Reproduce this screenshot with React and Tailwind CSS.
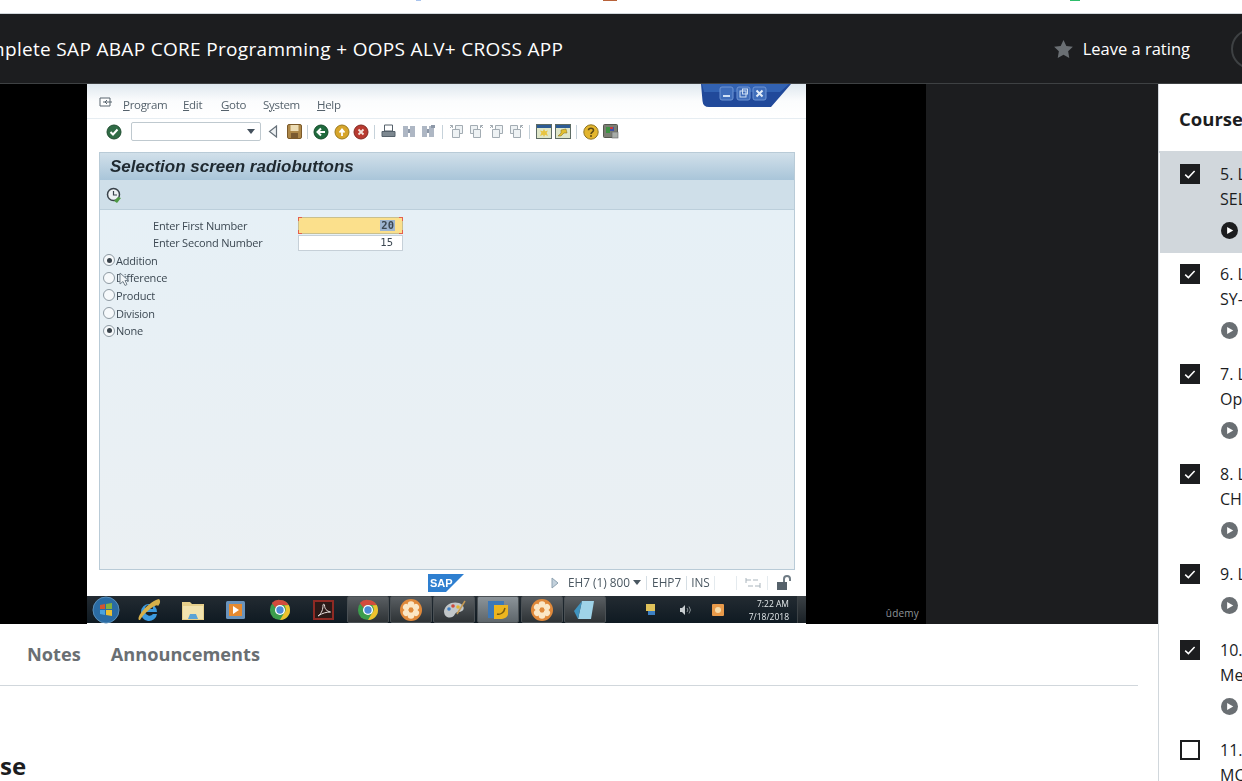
import React from "react";

const UI = { fontFamily: '"Open Sans", "Noto Sans", sans-serif' };
const SAPF = { fontFamily: '"Open Sans", "Liberation Sans", sans-serif' };

function Check() {
  return (
    <svg width="20" height="20" viewBox="0 0 20 20" className="shrink-0 block">
      <rect width="20" height="20" fill="#1c1d1f" />
      <path d="M5.2 10.6l3.2 3 6.2-6.6" fill="none" stroke="#fff" strokeWidth="1.5" />
    </svg>
  );
}
function Empty() {
  return <div className="w-5 h-5 shrink-0 border-2 border-[#1c1d1f] bg-white" />;
}
function Play({ dark }) {
  return (
    <svg width="17" height="17" viewBox="0 0 18 18" className="block">
      <circle cx="9" cy="9" r="9" fill={dark ? "#1c1d1f" : "#6a6f73"} />
      <path d="M6.5 5.2v7.6L13 9z" fill="#fff" />
    </svg>
  );
}

const items = [
  { n: "5. L", t: "SEL", active: true, h: "h-[100px]", done: true },
  { n: "6. L", t: "SY-", h: "h-[100px]", done: true },
  { n: "7. L", t: "Op", h: "h-[100px]", done: true },
  { n: "8. L", t: "CH", h: "h-[100px]", done: true },
  { n: "9. L", h: "h-[76px]", done: true },
  { n: "10.", t: "Me", h: "h-[100px]", done: true },
  { n: "11.", t: "MC", h: "h-[100px]", done: false },
];

function Ball({ c1, c2, children }) {
  return (
    <svg width="16" height="16" viewBox="0 0 16 16" className="block shrink-0">
      <circle cx="8" cy="8" r="7" fill={c1} stroke={c2} strokeWidth="1" />
      {children}
    </svg>
  );
}
function GrayPage({ flip }) {
  return (
    <svg width="15" height="15" viewBox="0 0 15 15" className="block shrink-0">
      <g transform={flip ? "matrix(-1 0 0 1 15 0)" : undefined} fill="#eef2f4" stroke="#a3acb3" strokeWidth="1">
        <path d="M6.500 1.500h7v8h-7z" />
        <path d="M3.500 5.500h7v8h-7z" />
        <path d="M1 4l2.500-2.500M1 1.500h2.500V4" fill="none" />
      </g>
    </svg>
  );
}
function Binoc({ plus }) {
  return (
    <svg width="16" height="15" viewBox="0 0 16 15" className="block shrink-0">
      <rect x="2" y="2" width="5" height="11" fill="#aeb7c4" />
      <rect x="9" y="2" width="5" height="11" fill="#aeb7c4" />
      <rect x="7" y="5" width="2" height="4" fill="#8d98a8" />
      {plus && <path d="M11 1h4v3h-4z" fill="#8d98a8" />}
    </svg>
  );
}
function Sep() {
  return <div className="w-px h-3.5 bg-[#c6d2da] shrink-0" />;
}
function WinIcon({ variant }) {
  return (
    <svg width="16" height="15" viewBox="0 0 16 15" className="block shrink-0">
      <rect x="0.5" y="0.5" width="15" height="14" fill="#dfe6c8" stroke="#5d6b63" />
      <rect x="1" y="1" width="14" height="3" fill="#2d5b94" />
      {variant === 0 ? (
        <path d="M8 5l1.2 2.2L12 6.500l-1.400 2.200L12 12 9 10.800 8 13 7 10.800 4 12l1.400-3.300L4 6.500l2.800.7z" fill="#e8c542" />
      ) : (
        <path d="M3 12l3-3 0-3 5-1 1 4-3 0-3 3z" fill="#e2bf2f" stroke="#7f6a1c" strokeWidth="0.5" />
      )}
    </svg>
  );
}

function Toolbar() {
  return (
    <div className="h-[28px] flex items-center pl-[19px] pb-[2px] border-t border-[#e6edf2] bg-white">
      <Ball c1="#2f6b45" c2="#1f4d30">
        <path d="M4.500 8l2.500 2.500 4.500-5" fill="none" stroke="#fff" strokeWidth="2" />
      </Ball>
      <div className="ml-[9px] w-[130px] h-[19px] bg-white border border-[#bfc9cf] rounded-[2px] flex items-center justify-end pr-[5px]">
        <div className="w-0 h-0 border-l-[4px] border-r-[4px] border-t-[5px] border-l-transparent border-r-transparent border-t-[#44505c]" />
      </div>
      <svg width="10" height="13" viewBox="0 0 10 13" className="ml-[7px] block shrink-0">
        <path d="M8.500 1v11L1.500 6.500z" fill="#eef1f3" stroke="#667079" strokeWidth="1.200" />
      </svg>
      <svg width="15" height="15" viewBox="0 0 15 15" className="ml-[9px] block shrink-0">
        <rect x="0.5" y="0.5" width="14" height="14" rx="1.500" fill="#ad8748" stroke="#7c5a2a" />
        <rect x="3.500" y="1" width="8" height="6" fill="#ecdcb4" />
        <rect x="4" y="9" width="7" height="5" fill="#7a5a30" />
      </svg>
      <div className="ml-[5px]"><Sep /></div>
      <div className="ml-[5px]">
        <Ball c1="#1f6a3d" c2="#124a28">
          <path d="M12 8H6M8 4.500L4.500 8 8 11.500" fill="none" stroke="#fff" strokeWidth="2" />
        </Ball>
      </div>
      <div className="ml-[5px]">
        <Ball c1="#d7a52a" c2="#9b7a1b">
          <path d="M8 12V7M5.500 8.500L8 5.500l2.500 3" fill="none" stroke="#fff" strokeWidth="1.800" />
        </Ball>
      </div>
      <div className="ml-[3px]">
        <Ball c1="#b83a30" c2="#812820">
          <path d="M5.500 5.500l5 5M10.500 5.500l-5 5" fill="none" stroke="#f4e4dc" strokeWidth="1.800" />
        </Ball>
      </div>
      <div className="ml-[5px]"><Sep /></div>
      <svg width="15" height="15" viewBox="0 0 15 15" className="ml-[6px] block shrink-0">
        <path d="M3.500 1h8v6h-8z" fill="#fff" stroke="#55616b" />
        <path d="M1 7.500h13v5H1z" fill="#7d8890" stroke="#55616b" />
      </svg>
      <div className="ml-[5px]"><Binoc /></div>
      <div className="ml-[3px]"><Binoc plus /></div>
      <div className="ml-[6px]"><Sep /></div>
      <div className="ml-[6px] flex items-center gap-[5px]">
        <GrayPage /><GrayPage flip /><GrayPage /><GrayPage flip />
      </div>
      <div className="ml-[5px]"><Sep /></div>
      <div className="ml-[6px]"><WinIcon variant={0} /></div>
      <div className="ml-[3px]"><WinIcon variant={1} /></div>
      <div className="ml-[5px]"><Sep /></div>
      <svg width="16" height="16" viewBox="0 0 16 16" className="ml-[6px] block shrink-0">
        <circle cx="8" cy="8" r="7.200" fill="#e3b52e" stroke="#8f7420" />
        <path d="M5.500 6.300C5.500 3.500 10.500 3.500 10.500 6.300c0 1.900-2.500 1.800-2.500 3.700" fill="none" stroke="#5c4a16" strokeWidth="1.600" />
        <circle cx="8" cy="12" r="1" fill="#5c4a16" />
      </svg>
      <svg width="16" height="15" viewBox="0 0 16 15" className="ml-[4px] block shrink-0">
        <rect x="0.5" y="0.5" width="14" height="13" rx="1" fill="#7b7d73" stroke="#55574f" />
        <rect x="3" y="3" width="4" height="6" fill="#3d9142" />
        <rect x="7" y="3" width="4" height="4" fill="#3d52a8" />
        <rect x="7" y="3" width="3" height="2" fill="#c63b3b" />
        <rect x="9" y="8" width="6" height="6" fill="#a7aca8" stroke="#666" strokeWidth="0.6" />
      </svg>
    </div>
  );
}

function Radio({ on, label }) {
  return (
    <div className="h-[17.6px] flex items-center gap-[1px]">
      <div className="w-[12px] h-[12px] rounded-full border border-[#8e9aa3] bg-[#f6f9fb] flex items-center justify-center">
        {on && <div className="w-[5px] h-[5px] rounded-full bg-[#39434b]" />}
      </div>
      <span className="text-[11px] leading-none text-[#3c4852] tracking-[-0.2px]" style={SAPF}>{label}</span>
    </div>
  );
}

function Taskbtn({ children, active }) {
  return (
    <div className={"w-[42px] h-[27px] flex items-center justify-center border border-[#4a5054] rounded-[2px] " + (active ? "bg-gradient-to-b from-[#8c949a] to-[#5e666b]" : "bg-gradient-to-b from-[#5a5f63] to-[#2e3336]")}>
      {children}
    </div>
  );
}
function Chrome({ s = 22 }) {
  return (
    <svg width={s} height={s} viewBox="0 0 24 24" className="block">
      <circle cx="12" cy="12" r="11" fill="#3c9d4c" />
      <path d="M12 1a11 11 0 0 1 9.500 5.500H12A5.500 5.500 0 0 0 7 9.500L3 4.300A11 11 0 0 1 12 1z" fill="#d44b3c" />
      <path d="M21.500 6.500A11 11 0 0 1 12 23l4.700-8A5.500 5.500 0 0 0 16.500 7z" fill="#eec22e" />
      <circle cx="12" cy="12" r="5.500" fill="#fff" />
      <circle cx="12" cy="12" r="4" fill="#4c8ad6" />
    </svg>
  );
}
function Flower({ s = 24 }) {
  return (
    <svg width={s} height={s} viewBox="0 0 24 24" className="block">
      <circle cx="12" cy="12" r="11" fill="#e0893a" />
      {[0, 60, 120, 180, 240, 300].map((a) => (
        <circle key={a} cx="12" cy="6.500" r="3.300" fill="#fbe7c6" transform={`rotate(${a} 12 12)`} />
      ))}
      <circle cx="12" cy="12" r="2.400" fill="#e0893a" />
    </svg>
  );
}

function Taskbar() {
  return (
    <div className="h-[27px] bg-gradient-to-b from-[#232b32] to-[#0f1a22] flex items-center pl-[5px] relative">
      <svg width="28" height="28" viewBox="0 0 28 28" className="block shrink-0">
        <circle cx="14" cy="14" r="13" fill="#2a6ba3" />
        <circle cx="14" cy="14" r="13" fill="none" stroke="#5a8fb9" />
        <path d="M8 9l5-1v5H8z" fill="#d4562f" />
        <path d="M14 8l6-1v6h-6z" fill="#83b13f" />
        <path d="M8 14h5v5l-5-1z" fill="#4aa3de" />
        <path d="M14 14h6v6l-6-1z" fill="#edc032" />
      </svg>
      <svg width="26" height="24" viewBox="0 0 26 24" className="block ml-[16px] shrink-0">
        <path d="M5 14a8 8 0 1 1 16 0H9a4.500 4.500 0 0 0 8 2h4a8 8 0 0 1-16-2zM9 11h8a4 4 0 0 0-8 0z" fill="#3c9be0" />
        <path d="M3 22C0 18 14 3 23 1c2 2 1 5-1 7C21 4 7 16 4 22z" fill="#d6b04a" />
      </svg>
      <svg width="24" height="22" viewBox="0 0 24 22" className="block ml-[19px] shrink-0">
        <path d="M1 3h8l2 2h12v16H1z" fill="#e6cf8a" />
        <rect x="2" y="7" width="20" height="13" fill="#f2e3ae" />
        <path d="M7 20l2-5h6l2 5z" fill="#5ba3d6" />
      </svg>
      <svg width="20" height="18" viewBox="0 0 20 18" className="block ml-[21px] shrink-0">
        <rect width="19" height="18" rx="1.500" fill="#6a93bb" />
        <rect x="3" y="3" width="13" height="12" fill="#e68a2e" />
        <path d="M7 5v8l6-4z" fill="#fff" />
      </svg>
      <div className="ml-[23px] shrink-0"><Chrome /></div>
      <div className="ml-[22px] w-[21px] h-[20px] shrink-0 border-2 border-[#8f2a24] bg-[#2b1a18] flex items-center justify-center">
        <svg width="14" height="14" viewBox="0 0 14 14" className="block">
          <path d="M1 13c4-3 5-7 5-11 0-1 1.400-1 1.500 0 .2 4 2 6 6 7-4 0-8 1-12.500 4z" fill="none" stroke="#e8e0de" strokeWidth="1" />
        </svg>
      </div>
      <div className="ml-[13px] flex shrink-0 gap-[1px]">
        <Taskbtn><Chrome /></Taskbtn>
        <Taskbtn><Flower /></Taskbtn>
        <Taskbtn>
          <svg width="24" height="20" viewBox="0 0 24 20" className="block">
            <path d="M2 11C3 4 11 1 17 3c5 2 6 6 3 8-3 2-5 0-7 3-2 4-5 4-8 3-2-1-3-3-3-6z" fill="#c2c7c9" />
            <circle cx="7" cy="9" r="1.800" fill="#3f7fc4" />
            <circle cx="11" cy="6" r="1.800" fill="#d0493c" />
            <circle cx="16" cy="7" r="1.800" fill="#e3b52e" />
            <path d="M15 14L23 1" stroke="#c69a53" strokeWidth="1.500" />
          </svg>
        </Taskbtn>
      </div>
      <div className="ml-[2px] flex shrink-0 gap-[2px]">
        <Taskbtn active>
          <svg width="24" height="22" viewBox="0 0 24 22" className="block">
            <rect x="2" y="2" width="16" height="17" fill="#3c78b8" />
            <path d="M8 6h14v9c0 3-4 5-8 5H8z" fill="#edb51f" />
            <path d="M11 15c3 1 7-1 8-6" fill="none" stroke="#7a5c0e" strokeWidth="1.500" />
          </svg>
        </Taskbtn>
        <Taskbtn><Flower /></Taskbtn>
      </div>
      <div className="ml-px shrink-0">
        <Taskbtn>
          <svg width="24" height="22" viewBox="0 0 24 22" className="block">
            <path d="M5 20L9 2h12l-3 18z" fill="#9fd3e8" />
            <path d="M5 20L1 12 9 2z" fill="#3f93bf" />
          </svg>
        </Taskbtn>
      </div>
      <svg width="12" height="14" viewBox="0 0 12 14" className="block ml-[39px] shrink-0">
        <rect x="1" y="1" width="9" height="7" fill="#e0c25a" />
        <rect x="3" y="8" width="7" height="4" fill="#3c7fc2" />
      </svg>
      <svg width="12" height="12" viewBox="0 0 12 12" className="block ml-[22px] shrink-0">
        <path d="M1 4h2l3-3v10L3 8H1z" fill="#c9ced1" />
        <path d="M8 4a3 3 0 0 1 0 4M10 2.500a5.500 5.500 0 0 1 0 7" fill="none" stroke="#8a9296" />
      </svg>
      <svg width="12" height="12" viewBox="0 0 24 24" className="block ml-[21px] shrink-0">
        <rect width="24" height="24" rx="2" fill="#e89a4a" />
        <circle cx="12" cy="12" r="6" fill="#f6dcaa" />
      </svg>
      <div className="ml-[17px] w-[48px] text-right text-[8.500px] leading-[13px] text-[#e3e8ea] shrink-0" style={SAPF}>
        <div>7:22 AM</div>
        <div>7/18/2018</div>
      </div>
      <div className="ml-auto w-[9px] h-full bg-gradient-to-b from-[#3c4246] to-[#1a2126] border-l border-[#3c4246]" />
    </div>
  );
}

function SapScreen() {
  return (
    <div className="w-[719px] h-full flex flex-col bg-white relative blur-[0.4px] overflow-hidden">
      {/* window controls lie over the title bar */}
      <svg width="90" height="24" viewBox="0 0 90 24" className="absolute top-0 left-[614px] block">
        <path d="M0 0h90L70 23H8Q2 23 1.500 17z" fill="#21499a" />
        <path d="M1 0h87L79 8H3z" fill="#3262b2" />
        <rect x="19" y="3" width="13" height="13" rx="2" fill="#3f6dba" stroke="#6f95d4" />
        <rect x="22" y="11" width="7" height="2" fill="#cfe0f4" />
        <rect x="36" y="3" width="13" height="13" rx="2" fill="#3f6dba" stroke="#6f95d4" />
        <rect x="39" y="7" width="6" height="6" fill="none" stroke="#cfe0f4" />
        <rect x="41.500" y="5" width="5" height="5" fill="none" stroke="#cfe0f4" />
        <rect x="52" y="3" width="13" height="13" rx="2" fill="#3f6dba" stroke="#6f95d4" />
        <path d="M55.500 6.500l6 6M61.500 6.500l-6 6" stroke="#e3edf9" strokeWidth="2" />
      </svg>
      <div className="h-[34px] bg-gradient-to-b from-[#dfe8ef] via-[#fbfcfd] to-white flex items-center pl-[12px] pt-[7px]">
        <svg width="14" height="12" viewBox="0 0 14 12" className="block mt-[-4px] shrink-0">
          <path d="M1 1h10v8H1zM4 5h9M8 3l-2 2 2 2" fill="#fff" stroke="#58656f" strokeWidth="1" />
        </svg>
        <div className="ml-[10px] flex text-[11.500px] leading-none text-[#55626c] tracking-[-0.3px]" style={SAPF}>
          <span className="w-[60px]"><u>P</u>rogram</span>
          <span className="w-[38px]"><u>E</u>dit</span>
          <span className="w-[42px]"><u>G</u>oto</span>
          <span className="w-[54px]">S<u>y</u>stem</span>
          <span><u>H</u>elp</span>
        </div>
      </div>
      <Toolbar />
      <div className="mx-[12px] mt-[6px] w-[696px] h-[418px] flex flex-col border border-[#b9cbd7] shrink-0">
        <div className="h-[27px] bg-gradient-to-b from-[#d1e0ea] to-[#a9c5d9] flex items-center pl-[10px] pb-[1px]">
          <span className="text-[17px] leading-none font-bold italic text-[#1f2930] whitespace-nowrap" style={{ fontFamily: '"Liberation Sans", sans-serif' }}>Selection screen radiobuttons</span>
        </div>
        <div className="h-[30px] bg-[#cfdfe9] border-b border-[#bccfdb] flex items-center pl-[6px]">
          <svg width="16" height="16" viewBox="0 0 16 16" className="block">
            <circle cx="7.500" cy="7.500" r="6" fill="#eef2f4" stroke="#39424a" strokeWidth="1.500" />
            <path d="M7.500 4v4H11" fill="none" stroke="#39424a" strokeWidth="1.200" />
            <path d="M8 14l4-4 3 1-4 5z" fill="#4f9a45" />
          </svg>
        </div>
        <div className="flex-1 bg-gradient-to-b from-[#e6f0f6] to-[#ebf0f3] pt-[7px] pl-[3px]">
          <div className="flex items-center h-[17px] pl-[50px]">
            <span className="w-[145px] text-[11px] leading-none text-[#3c4852] tracking-[-0.2px]" style={SAPF}>Enter First Number</span>
            <div className="w-[105px] h-[17px] bg-[#fbe08c] border border-[#c9c08e] flex items-center justify-end pr-[1px] relative">
              <span className="text-[10.500px] leading-none font-bold text-[#3c4852] bg-[#9db4cf] px-[1px] mr-[6px]" style={{ fontFamily: '"DejaVu Sans Mono", monospace' }}>20</span>
              <div className="absolute -left-[1px] -top-[1px] w-[4px] h-[4px] border-l border-t border-[#e4604e]" />
              <div className="absolute -right-[1px] -top-[1px] w-[4px] h-[4px] border-r border-t border-[#e4604e]" />
              <div className="absolute -left-[1px] -bottom-[1px] w-[4px] h-[4px] border-l border-b border-[#e4604e]" />
              <div className="absolute -right-[1px] -bottom-[1px] w-[4px] h-[4px] border-r border-b border-[#e4604e]" />
            </div>
          </div>
          <div className="flex items-center h-[17px] pl-[50px]">
            <span className="w-[145px] text-[11px] leading-none text-[#3c4852] tracking-[-0.2px]" style={SAPF}>Enter Second Number</span>
            <div className="w-[105px] h-[16px] bg-white border border-[#c6d0d8] flex items-center justify-end pr-[9px]">
              <span className="text-[10.500px] leading-none text-[#3c4852]" style={{ fontFamily: '"DejaVu Sans Mono", monospace' }}>15</span>
            </div>
          </div>
          <div className="relative mt-[0.5px]">
            <Radio on label="Addition" />
            <Radio label="Difference" />
            <Radio label="Product" />
            <Radio label="Division" />
            <Radio on label="None" />
            {/* mouse pointer over the Difference label */}
            <svg width="10" height="15" viewBox="0 0 10 15" className="absolute left-[16px] top-[20px] block">
              <path d="M1 1v11l3-2.500 2 4 2-1-2-4h3.500z" fill="#f2f6f8" stroke="#76838d" strokeWidth="1" />
            </svg>
          </div>
        </div>
      </div>
      <div className="h-[27px] flex items-center mt-[-1px] text-[#4a5761] shrink-0 relative">
        <svg width="36" height="18" viewBox="0 0 36 18" className="block ml-[341px] shrink-0">
          <path d="M0 0h36L18 18H0z" fill="#2e7fd0" />
          <text x="2" y="13" fontSize="11" fontWeight="700" fill="#fff" fontFamily="Liberation Sans">SAP</text>
        </svg>
        <svg width="8" height="12" viewBox="0 0 8 12" className="block ml-[87px] shrink-0">
          <path d="M1 1v10l6-5z" fill="#c3d1dc" stroke="#8ea2b1" />
        </svg>
        <span className="ml-[9px] text-[11.800px] leading-none whitespace-nowrap" style={SAPF}>EH7 (1) 800</span>
        <div className="ml-[3px] w-0 h-0 border-l-[4px] border-r-[4px] border-t-[5px] border-l-transparent border-r-transparent border-t-[#4a5761]" />
        <div className="ml-[5px] w-px h-[14px] bg-[#d5dee4]" />
        <span className="ml-[5px] text-[11.800px] leading-none" style={SAPF}>EHP7</span>
        <div className="ml-[5px] w-px h-[14px] bg-[#d5dee4]" />
        <span className="ml-[4px] text-[11.800px] leading-none" style={SAPF}>INS</span>
        <div className="ml-[4px] w-px h-[14px] bg-[#e4eaee]" />
        <div className="ml-[21px] w-px h-[14px] bg-[#e4eaee]" />
        <svg width="16" height="12" viewBox="0 0 16 12" className="block ml-[8px] shrink-0">
          <path d="M1 1v5M1 3h5M15 6v5M15 9h-5M8 3h5M3 9h5" stroke="#a9b4bc" fill="none" />
        </svg>
        <div className="ml-[6px] w-px h-[14px] bg-[#e4eaee]" />
        <svg width="16" height="16" viewBox="0 0 16 16" className="block ml-[8px] shrink-0">
          <rect x="1" y="7" width="10" height="8" fill="#55616a" />
          <path d="M8 7V4a3 3 0 0 1 6 0v2" fill="none" stroke="#6f7b84" strokeWidth="2" />
        </svg>
      </div>
      <Taskbar />
    </div>
  );
}

export default function App() {
  return (
    <div className="w-[1242px] h-[781px] overflow-hidden bg-white flex flex-col" style={UI}>
      <div className="h-[14px] shrink-0 bg-white border-b border-[#d1d7dc] flex items-start relative">
        <div className="absolute left-[416px] top-0 w-[5px] h-[1px] bg-[#a9c4ee]" />
        <div className="absolute left-[603px] top-0 w-[14px] h-[1px] bg-[#b8623a]" />
        <div className="absolute left-[1070px] top-0 w-[10px] h-[1px] bg-[#2ebd6b]" />
      </div>
      <div className="h-[70px] shrink-0 bg-[#1c1d1f] border-b border-[#3e4143] flex items-center">
        <span className="ml-[-37px] pt-[1px] text-[19px] tracking-[0.32px] text-white whitespace-nowrap">Complete SAP ABAP CORE Programming + OOPS ALV+ CROSS APP</span>
        <div className="ml-auto flex items-center shrink-0">
          <svg width="19" height="18" viewBox="0 0 20 19" className="block shrink-0">
            <path d="M10 0l3 6.300 6.900.9-5 4.800 1.200 6.900L10 15.600 3.900 18.900 5.100 12 .1 7.200 7 6.300z" fill="#6a6f73" />
          </svg>
          <span className="ml-[10px] pt-[1px] text-[16.500px] text-white whitespace-nowrap">Leave a rating</span>
          <div className="ml-[41px] mr-[-29px] w-[40px] h-[40px] rounded-full border-2 border-[#3e4143]" />
        </div>
      </div>
      <div className="flex flex-1 min-h-0">
        <div className="w-[1158px] shrink-0 flex flex-col">
          <div className="h-[540px] shrink-0 bg-[#1c1d1f] flex">
            <div className="w-[926px] h-full bg-black flex pl-[87px] relative">
              <SapScreen />
              <span className="absolute right-[7px] bottom-[6px] text-[10px] leading-none text-[#8f9499] tracking-[0.2px]">ûdemy</span>
            </div>
          </div>
          <div className="w-[1138px] h-[62px] shrink-0 border-b border-[#d1d7dc] flex items-center pl-[27px] pt-[1px] gap-[30px] text-[18.200px] font-bold text-[#6a6f73]">
            <span>Notes</span>
            <span>Announcements</span>
          </div>
          <h2 className="mt-[61px] text-[24px] leading-[38px] font-bold text-[#1c1d1f]">se</h2>
        </div>
        <div className="w-[84px] shrink-0 flex flex-col border-l border-[#d1d7dc] bg-white overflow-hidden">
          <div className="h-[69px] shrink-0 border-b-2 border-[#d1d7dc] flex items-center pl-[20px] pt-[3px]">
            <span className="text-[18.500px] font-bold text-[#1c1d1f] whitespace-nowrap">Course</span>
          </div>
          {items.map((it) => (
            <div key={it.n} className={"shrink-0 flex pt-[11px] " + it.h + (it.active ? " bg-[#d1d7dc] ml-px pl-[20px]" : " pl-[21px]")}>
              {it.done ? <Check /> : <Empty />}
              <div className="ml-[20px] flex flex-col whitespace-nowrap text-[16px] leading-[25px] text-[#1c1d1f] mt-[-2px]">
                <span>{it.n}</span>
                {it.t && <span>{it.t}</span>}
                <div className="ml-px mt-[10px]"><Play dark={it.active} /></div>
              </div>
            </div>
          ))}
        </div>
      </div>
    </div>
  );
}
